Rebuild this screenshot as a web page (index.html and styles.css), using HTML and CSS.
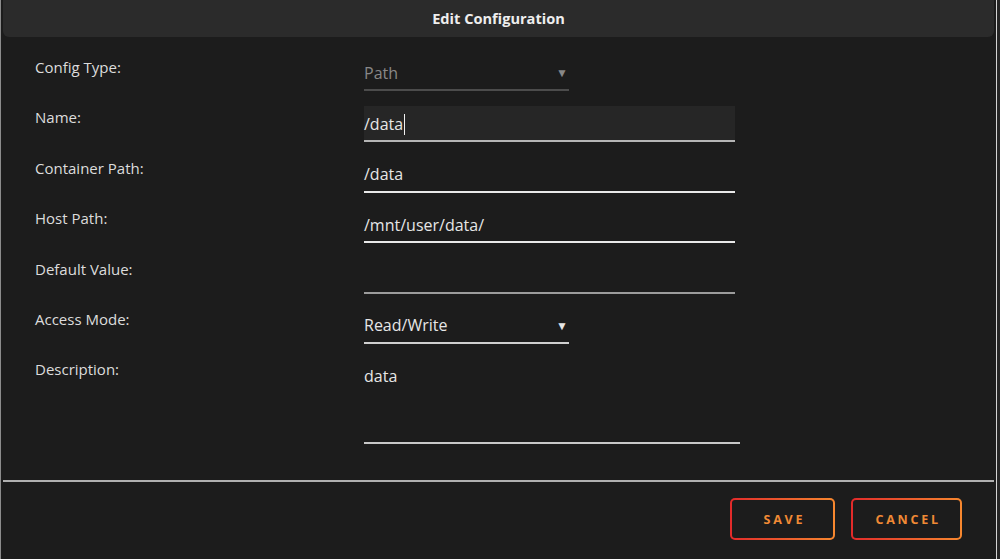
FILE: index.html
```html
<!DOCTYPE html>
<html>
<head>
    <link rel="stylesheet" href="styles.css">
</head>
<body>
    <div class="dialog">
        <div class="dialog-title">Edit Configuration</div>

        <div class="config-form">
            <div class="form-row">
                <label class="form-label">Config Type:</label>
                <div class="field select disabled">
                    <span>Path</span>
                    <span class="arrow">&#9660;</span>
                </div>
            </div>
            <div class="form-row">
                <label class="form-label">Name:</label>
                <div class="field text focused">
                    <span>/data</span><span class="caret"></span>
                </div>
            </div>
            <div class="form-row">
                <label class="form-label">Container Path:</label>
                <div class="field text bright"><span>/data</span></div>
            </div>
            <div class="form-row">
                <label class="form-label">Host Path:</label>
                <div class="field text bright"><span>/mnt/user/data/</span></div>
            </div>
            <div class="form-row">
                <label class="form-label">Default Value:</label>
                <div class="field text dim"></div>
            </div>
            <div class="form-row">
                <label class="form-label">Access Mode:</label>
                <div class="field select">
                    <span>Read/Write</span>
                    <span class="arrow">&#9660;</span>
                </div>
            </div>
            <div class="form-row last">
                <label class="form-label">Description:</label>
                <div class="field textarea"><span>data</span></div>
            </div>
        </div>

        <div class="divider"></div>

        <div class="controls">
            <button class="btn">SAVE</button>
            <button class="btn">CANCEL</button>
        </div>
    </div>
</body>
</html>
```

FILE: styles.css
```css
html, body {
    margin: 0;
    padding: 0;
    height: 100%;
    background-color: #262626;
    font-family: "Open Sans", Arial, sans-serif;
    overflow: hidden;
}

.dialog {
    width: 997px;
    height: 559px;
    background-color: #1c1c1c;
    border-left: 1px solid #8c8c8c;
    border-right: 1px solid #d4d4d4;
    box-sizing: border-box;
    padding: 0 2px;
}

.dialog-title {
    height: 37px;
    line-height: 37px;
    background-color: #2b2b2b;
    border-radius: 0 0 6px 6px;
    color: #eeeeee;
    font-weight: bold;
    font-size: 14.6px;
    text-align: center;
}

.config-form {
    padding: 19px 0 0 32px;
}

.form-row {
    display: flex;
    align-items: flex-start;
    height: 50.4px;
}

.form-row.last {
    height: auto;
}

.form-label {
    width: 329px;
    padding-top: 1px;
    font-size: 15px;
    line-height: 20px;
    color: #dcdcdc;
}

.field {
    box-sizing: border-box;
    height: 36px;
    border-bottom: 2px solid #cfcfcf;
    font-size: 16px;
    color: #e6e6e6;
    display: flex;
    align-items: center;
    padding-top: 1px;
}

.field.text {
    width: 371px;
}

.field.focused {
    background-color: #262626;
    border-bottom-color: #b5b5b5;
    padding-top: 2px;
}

.field.bright {
    border-bottom-color: #e8e8e8;
}

.field.dim {
    border-bottom-color: #9c9c9c;
}

.caret {
    display: inline-block;
    width: 1px;
    height: 21px;
    margin-left: 1px;
    background-color: #f0f0f0;
}

.field.select {
    width: 205px;
    justify-content: space-between;
}

.field.select.disabled {
    color: #888888;
    border-bottom-color: #4c4c4c;
    padding-top: 0;
    height: 35px;
}

.arrow {
    font-size: 12px;
    padding-right: 1px;
}

.field.textarea {
    width: 376px;
    height: 86px;
    align-items: flex-start;
    padding-top: 7px;
    border-bottom-color: #c8c8c8;
}

.divider {
    margin-top: 36px;
    height: 2px;
    background-color: #b0b0b0;
}

.controls {
    display: flex;
    justify-content: flex-end;
    gap: 16px;
    padding: 16px 32px 0 0;
}

.btn {
    min-width: 105px;
    height: 42px;
    padding: 0 19px 0 22px;
    border: 2px solid transparent;
    border-radius: 5px;
    background: linear-gradient(#1c1c1c, #1c1c1c) padding-box,
                linear-gradient(90deg, #e22a2a, #f7882f) border-box;
    color: #f08a35;
    font-family: "Open Sans", Arial, sans-serif;
    font-weight: bold;
    font-size: 12.5px;
    letter-spacing: 2.8px;
    cursor: pointer;
}
```
